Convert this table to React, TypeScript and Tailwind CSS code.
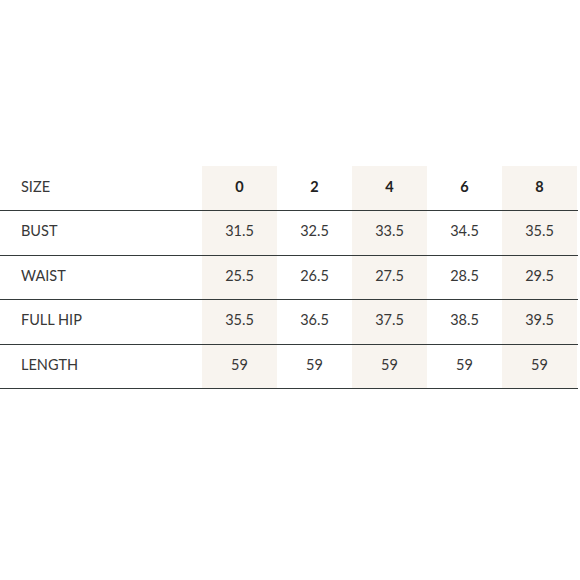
import React from 'react';

const sizes = ['0', '2', '4', '6', '8'];

const rows: { label: string; values: string[] }[] = [
  { label: 'BUST', values: ['31.5', '32.5', '33.5', '34.5', '35.5'] },
  { label: 'WAIST', values: ['25.5', '26.5', '27.5', '28.5', '29.5'] },
  { label: 'FULL HIP', values: ['35.5', '36.5', '37.5', '38.5', '39.5'] },
  { label: 'LENGTH', values: ['59', '59', '59', '59', '59'] },
];

const App: React.FC = () => {
  return (
    <div className="w-[580px] h-[580px] bg-white pt-[166px] text-[#383838]" style={{ fontFamily: 'Lato, "Open Sans", sans-serif' }}>
      <div className="w-[578px]">
        {/* Header row */}
        <div className="grid grid-cols-[202px_repeat(5,75px)] h-[45px] border-b-[1.5px] border-[#353b3b]">
          <div className="flex items-center pl-[21px] pb-[3px] text-[14.5px]">SIZE</div>
          {sizes.map((s, i) => (
            <div
              key={s}
              className={`flex items-center justify-center pb-[3px] text-[14.5px] font-bold text-[#222] ${i % 2 === 0 ? 'bg-[#f8f4ef]' : ''}`}
            >
              {s}
            </div>
          ))}
        </div>

        {/* Measurement rows */}
        {rows.map((row) => (
          <div key={row.label} className="grid grid-cols-[202px_repeat(5,75px)] h-[44.5px] border-b-[1.5px] border-[#353b3b]">
            <div className="flex items-center pl-[21px] pb-[3px] text-[14.5px]">{row.label}</div>
            {row.values.map((v, i) => (
              <div
                key={i}
                className={`flex items-center justify-center pb-[3px] text-[14.5px] ${i % 2 === 0 ? 'bg-[#f8f4ef]' : ''}`}
              >
                {v}
              </div>
            ))}
          </div>
        ))}
      </div>
    </div>
  );
};

export default App;
